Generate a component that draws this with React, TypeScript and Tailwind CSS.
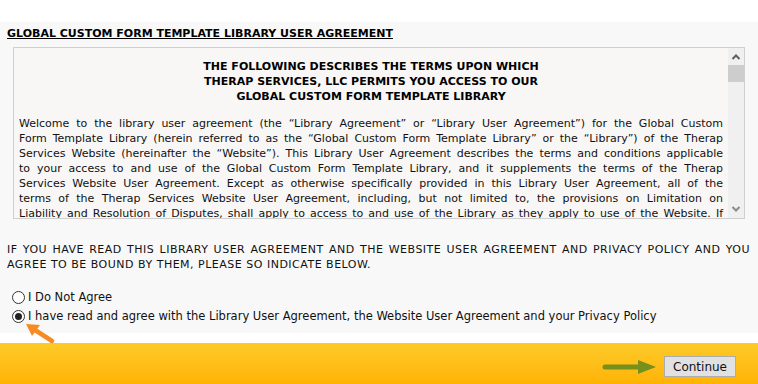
import React from "react";

const font = { fontFamily: '"DejaVu Sans", Verdana, sans-serif' };

const paragraph = [
  "Welcome to the library user agreement (the “Library Agreement” or “Library User Agreement”) for the Global Custom",
  "Form Template Library (herein referred to as the “Global Custom Form Template Library” or the “Library”) of the Therap",
  "Services Website (hereinafter the “Website”). This Library User Agreement describes the terms and conditions applicable",
  "to your access to and use of the Global Custom Form Template Library, and it supplements the terms of the Therap",
  "Services Website User Agreement. Except as otherwise specifically provided in this Library User Agreement, all of the",
  "terms of the Therap Services Website User Agreement, including, but not limited to, the provisions on Limitation on",
  "Liability and Resolution of Disputes, shall apply to access to and use of the Library as they apply to use of the Website. If",
];

function Radio({ checked, label }: { checked?: boolean; label: string }) {
  return (
    <label className="flex items-center gap-[3px] h-[19px]">
      <span className="w-[13px] h-[13px] rounded-full border border-[#333] bg-white flex items-center justify-center">
        {checked && <span className="w-[7px] h-[7px] rounded-full bg-[#222]" />}
      </span>
      <span className="text-[11.5px]">{label}</span>
    </label>
  );
}

export default function App() {
  return (
    <div className="w-[758px] h-[384px] bg-white relative overflow-hidden text-[11px] text-black" style={font}>
      <div className="h-[22px] bg-white" />

      {/* ==========================================
          AGREEMENT
          ========================================== */}
      <section className="h-[311px] bg-[#f8f8f8] pl-[7px] pr-[8px] pt-[5px]">
        <h1 className="font-bold underline leading-[14px] text-[11px]">GLOBAL CUSTOM FORM TEMPLATE LIBRARY USER AGREEMENT</h1>

        <div className="mt-[6px] ml-[6px] w-[732px] h-[172px] border border-[#cfcfcf] bg-[#f8f7f6] flex">
          <div className="flex-1 overflow-hidden pl-[5px] pr-[5px] pt-[11px]">
            <div className="font-bold text-center leading-[15px]">
              <div>THE FOLLOWING DESCRIBES THE TERMS UPON WHICH</div>
              <div>THERAP SERVICES, LLC PERMITS YOU ACCESS TO OUR</div>
              <div>GLOBAL CUSTOM FORM TEMPLATE LIBRARY</div>
            </div>
            <div className="mt-[12px] leading-[15px] text-[#111]">
              {paragraph.map((line, i) => (
                <div key={i} className="text-justify [text-align-last:justify] whitespace-nowrap">
                  {line}
                </div>
              ))}
            </div>
          </div>
          <div className="w-[16px] bg-[#f0f0f0] flex flex-col items-center">
            <svg width="16" height="17" viewBox="0 0 16 17" className="shrink-0">
              <path d="M4.5 11 L8 7.5 L11.5 11" fill="none" stroke="#606060" strokeWidth="2" />
            </svg>
            <div className="w-[16px] h-[17px] bg-[#cdcdcd]" />
            <div className="flex-1" />
            <svg width="16" height="17" viewBox="0 0 16 17" className="shrink-0">
              <path d="M4.5 6 L8 9.5 L11.5 6" fill="none" stroke="#8a8a8a" strokeWidth="2" />
            </svg>
          </div>
        </div>

        <p className="mt-[23px] leading-[15px] text-[#111] tracking-[0.5px]">
          <span className="block text-justify [text-align-last:justify] whitespace-nowrap">
            IF YOU HAVE READ THIS LIBRARY USER AGREEMENT AND THE WEBSITE USER AGREEMENT AND PRIVACY POLICY AND YOU
          </span>
          <span className="block">AGREE TO BE BOUND BY THEM, PLEASE SO INDICATE BELOW.</span>
        </p>

        <div className="mt-[16px] ml-[5px] flex flex-col text-[#111]">
          <Radio label="I Do Not Agree" />
          <Radio checked label="I have read and agree with the Library User Agreement, the Website User Agreement and your Privacy Policy" />
        </div>
      </section>

      <div className="h-[10px] bg-white" />

      {/* ==========================================
          FOOTER
          ========================================== */}
      <footer className="h-[41px] bg-gradient-to-b from-[#fdca27] to-[#ffb300] flex items-end justify-end pr-[22px] pb-[7px]">
        <button className="w-[72px] h-[21px] bg-[#e1e1e1] border border-[#adadad] text-[12px] leading-none text-[#111]" style={font}>
          Continue
        </button>
      </footer>

      {/* annotation arrows */}
      <svg className="absolute left-[20px] top-[318px]" width="40" height="30" viewBox="0 0 40 30">
        <path d="M32 23 L15 12" stroke="#f68b24" strokeWidth="4.5" strokeLinecap="round" />
        <polygon points="6,6 20,7 12,18" fill="#f68b24" />
      </svg>
      <svg className="absolute left-[600px] top-[359px]" width="58" height="18" viewBox="0 0 58 18">
        <path d="M5 8 L42 8" stroke="#76901e" strokeWidth="5" strokeLinecap="round" />
        <polygon points="38,1 56,8 38,15" fill="#76901e" />
      </svg>
    </div>
  );
}
